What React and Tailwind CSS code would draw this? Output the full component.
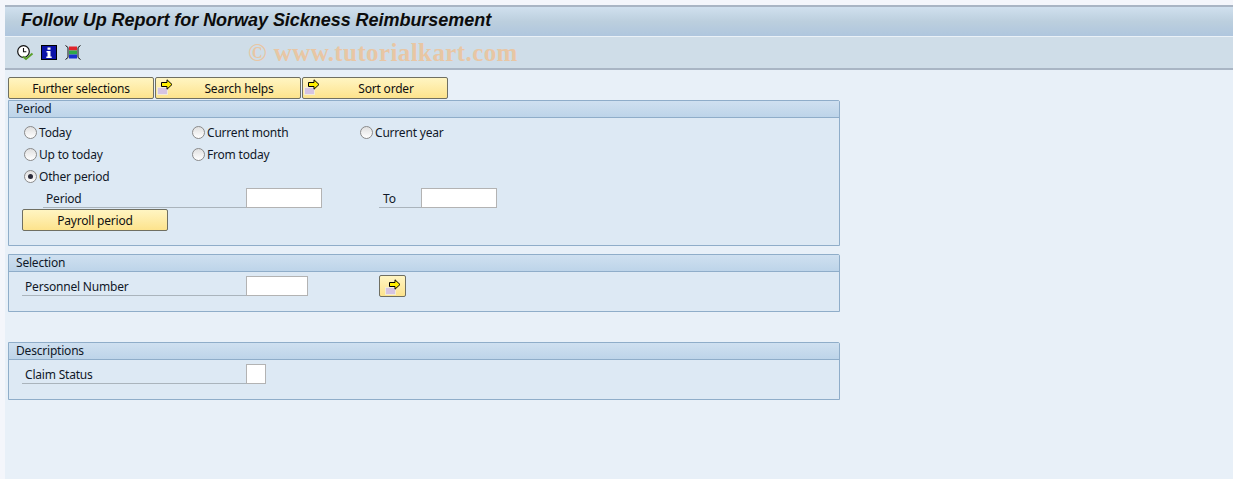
const sapFont = "font-['Tahoma','Noto_Sans','DejaVu_Sans',sans-serif]";
const labelText = "text-[12px] tracking-[-0.2px] text-[#101828]";

function ArrowIcon() {
  return (
    <svg width="16" height="16" viewBox="0 0 16 16" className="shrink-0">
      <rect x="0.5" y="8.5" width="10" height="7" fill="#d6c4e2" stroke="#f1ecd8" strokeWidth="1" />
      <path d="M4.5 3.5H10V0.8L15 5.5L10 10.2V7.5H4.5Z" fill="#ffee00" stroke="#000" strokeWidth="1" />
    </svg>
  );
}

function SapButton({ children, icon, className = "" }) {
  return (
    <button className={"relative flex h-[22px] items-center justify-center rounded-[2px] border border-[#6f6f62] bg-gradient-to-b from-[#fff5c2] to-[#fde38c] pt-[1px] text-[12px] tracking-[-0.2px] text-[#101010] " + className}>
      {icon && (
        <span className="absolute left-[1px] top-[1px]">
          <ArrowIcon />
        </span>
      )}
      {children}
    </button>
  );
}

function Radio({ label, checked, className = "" }) {
  return (
    <div className={"flex items-center " + className}>
      <span className="flex h-[13px] w-[13px] shrink-0 items-center justify-center rounded-full border border-[#8a8a8a] bg-gradient-to-b from-[#e0e0e0] to-[#ffffff]">
        {checked && <span className="h-[5px] w-[5px] rounded-full bg-[#2b2b3b]" />}
      </span>
      <span className={"ml-[2px] pt-[1px] " + labelText}>{label}</span>
    </div>
  );
}

function Field({ className = "" }) {
  return <div className={"h-[20px] border border-[#b3b3b3] bg-white " + className} />;
}

function Panel({ title, className = "", children }) {
  return (
    <section className={"w-[832px] rounded-tr-[2px] border border-[#8fadc9] bg-[#dde9f4] " + className}>
      <div className={"flex h-[17px] items-center border-b border-[#8fadc9] bg-gradient-to-b from-[#cfe0f0] to-[#bdd4e9] pl-[7px] " + labelText}>
        {title}
      </div>
      {children}
    </section>
  );
}

export default function App() {
  return (
    <div className={"min-h-screen h-[479px] overflow-hidden bg-[#f4f6fb] pt-[5px] pl-[5px] " + sapFont}>
      <div className="flex h-[474px] flex-col bg-[#e8f0f8]">
        <header className="flex h-[31px] items-center border-t-2 border-[#a9b5c4] bg-gradient-to-b from-[#d0e0ee] via-[#bccfde] to-[#afc6de] pb-[2px] pl-[16px] font-['Liberation_Sans',sans-serif] text-[18px] font-bold italic tracking-[-0.04px] text-[#0c0c0c]">
          Follow Up Report for Norway Sickness Reimbursement
        </header>
        <div className="flex h-[34px] items-center border-t border-b-2 border-t-[#eaf1f7] border-b-[#a9b5c4] bg-[#cfdde8] pl-[12px]">
          {/* clock with check */}
          <svg width="17" height="16" viewBox="0 0 17 16">
            <circle cx="6.5" cy="6.5" r="5.8" fill="#fff" stroke="#111" strokeWidth="1.2" />
            <path d="M6.5 3v3.8h2.8" fill="none" stroke="#111" strokeWidth="1.1" />
            <path d="M6 11.5l3 2.5 6.5-5.5" fill="none" stroke="#5aa02c" strokeWidth="2" />
          </svg>
          {/* info */}
          <svg width="16" height="16" viewBox="0 0 16 16" className="ml-[7px]">
            <rect x="0.5" y="0.5" width="15" height="14" fill="#0a12a8" stroke="#000" />
            <path d="M6.5 2.5h3v2.2h-3ZM5.5 6h4v5.5h1.2v1.5H5.3v-1.5h1.2V7.5h-1Z" fill="#fff" />
          </svg>
          {/* layout bars */}
          <svg width="16" height="16" viewBox="0 0 16 16" className="ml-[8px]">
            <rect x="4" y="1.5" width="8" height="4" fill="#e0242c" />
            <rect x="4" y="5.5" width="8" height="4" fill="#2fa84a" />
            <rect x="4" y="9.5" width="8" height="4" fill="#1a2fd0" />
            <path d="M0.5 0.5L3 2.5V12.5L0.5 14.5M15.5 0.5L13 2.5V12.5L15.5 14.5" fill="none" stroke="#111" />
          </svg>
          <span className="ml-[167px] font-['Liberation_Serif',serif] text-[25px] font-bold tracking-[0.4px] text-[#e8c6a4]">
            © www.tutorialkart.com
          </span>
        </div>

        <main className="pl-[3px] pt-[7px]">
          <div className="flex h-[23px] gap-[1px]">
            <SapButton className="w-[146px]">Further selections</SapButton>
            <SapButton icon className="w-[146px] pl-[22px]">Search helps</SapButton>
            <SapButton icon className="w-[146px] pl-[22px]">Sort order</SapButton>
          </div>

          <Panel title="Period" className="h-[146px]">
            <div className="pl-[15px] pt-[3px]">
              <div className="flex h-[22px] items-center">
                <Radio label="Today" className="w-[168px]" />
                <Radio label="Current month" className="w-[168px]" />
                <Radio label="Current year" />
              </div>
              <div className="flex h-[22px] items-center">
                <Radio label="Up to today" className="w-[168px]" />
                <Radio label="From today" />
              </div>
              <div className="flex h-[22px] items-center">
                <Radio label="Other period" checked />
              </div>
              <div className="flex h-[22px] items-center">
                <div className={"ml-[19px] flex h-[20px] w-[203px] items-center border-b border-[#aab4bc] pl-[3px] pt-[2px] " + labelText}>Period</div>
                <Field className="w-[76px]" />
                <div className={"ml-[57px] flex h-[20px] w-[42px] items-center border-b border-[#aab4bc] pl-[4px] pt-[2px] " + labelText}>To</div>
                <Field className="w-[76px]" />
              </div>
              <div className="flex h-[22px] items-center">
                <SapButton className="-ml-[2px] w-[146px]">Payroll period</SapButton>
              </div>
            </div>
          </Panel>

          <Panel title="Selection" className="mt-[8px] h-[58px]">
            <div className="flex items-center pl-[13px] pt-[3px]">
              <div className={"flex h-[20px] w-[224px] items-center border-b border-[#aab4bc] pl-[3px] pt-[2px] " + labelText}>Personnel Number</div>
              <Field className="w-[62px]" />
              <SapButton className="ml-[71px] w-[27px]"><ArrowIcon /></SapButton>
            </div>
          </Panel>

          <Panel title="Descriptions" className="mt-[30px] h-[58px]">
            <div className="flex items-center pl-[13px] pt-[4px]">
              <div className={"flex h-[20px] w-[224px] items-center border-b border-[#aab4bc] pl-[3px] pt-[2px] " + labelText}>Claim Status</div>
              <Field className="w-[20px]" />
            </div>
          </Panel>
        </main>
      </div>
    </div>
  );
}
